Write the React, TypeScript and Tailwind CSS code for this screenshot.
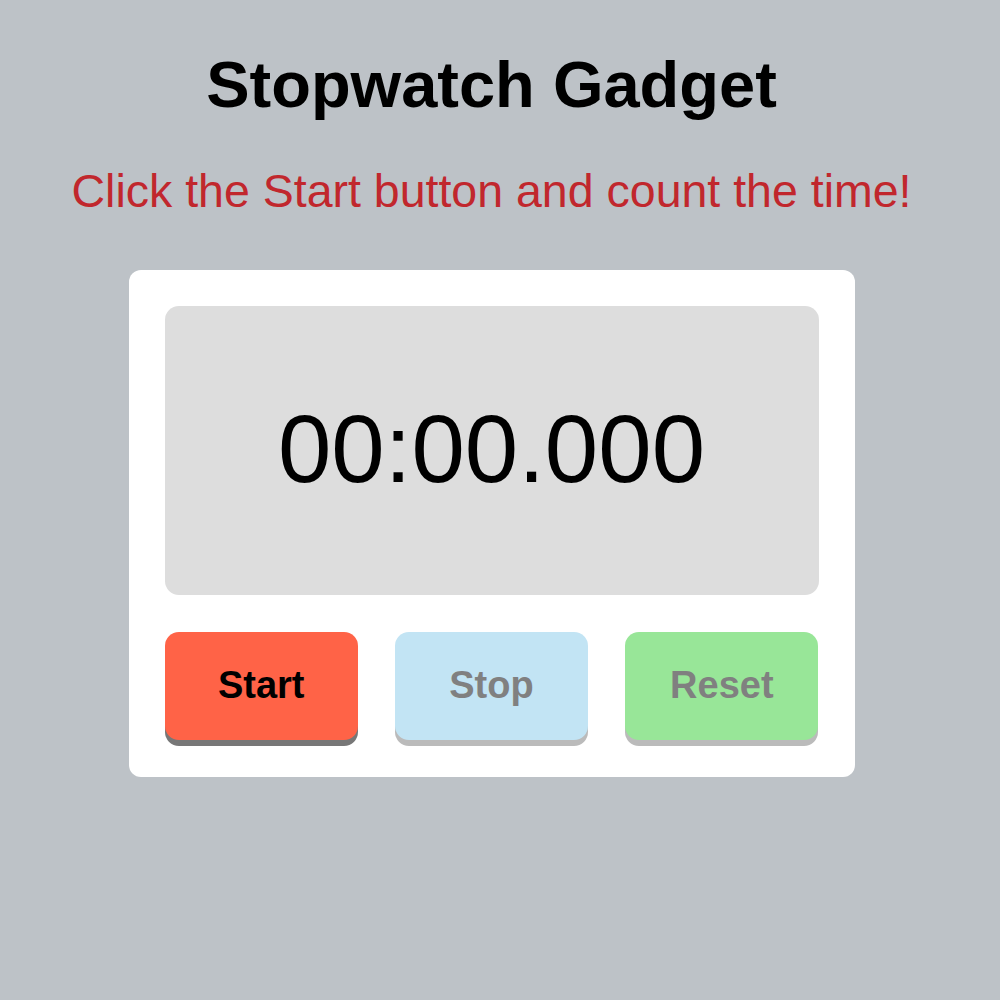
export default function App() {
  return (
    <div className="min-h-[1000px] w-full bg-[#bdc2c7] font-['Liberation_Sans',Arial,sans-serif]">
      <div className="w-[983px] flex flex-col items-center">
        <h1 className="mt-[52px] text-[65px] leading-none font-bold text-black">Stopwatch Gadget</h1>
        <p className="mt-[51px] text-[46.5px] leading-none text-[#c1272d]">Click the Start button and count the time!</p>
        <div className="mt-[55px] w-[726px] bg-white rounded-[12px] p-[36px]">
          <div className="h-[289px] bg-[#dddddd] rounded-[14px] flex items-center justify-center pb-[3px]">
            <span className="text-[96px] leading-none text-black">00:00.000</span>
          </div>
          <div className="mt-[37px] grid grid-cols-3 gap-[37px] pb-[1px]">
            <button className="h-[108px] rounded-[14px] bg-[#ff6347] shadow-[0_6px_0_#777777] text-[38px] font-bold text-black">Start</button>
            <button className="h-[108px] rounded-[14px] bg-[#c2e4f4] shadow-[0_6px_0_#bbbbbb] text-[38px] font-bold text-[#808080]">Stop</button>
            <button className="h-[108px] rounded-[14px] bg-[#98e698] shadow-[0_6px_0_#bbbbbb] text-[38px] font-bold text-[#808080]">Reset</button>
          </div>
        </div>
      </div>
    </div>
  );
}
